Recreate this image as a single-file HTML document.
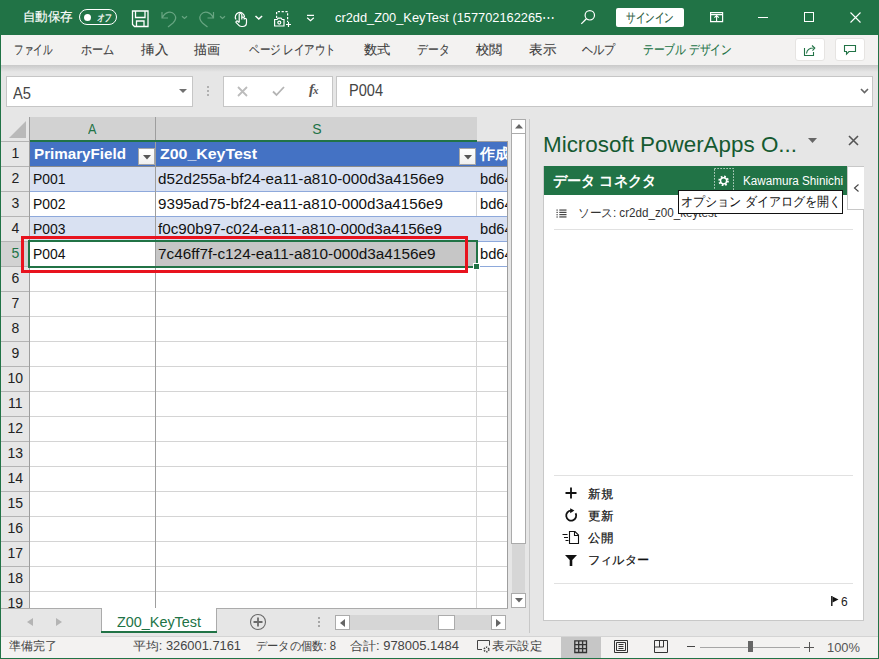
<!DOCTYPE html>
<html><head><meta charset="utf-8">
<style>
*{box-sizing:border-box;margin:0;padding:0}
html,body{width:879px;height:659px;overflow:hidden;background:#e6e6e6;font-family:"Liberation Sans",sans-serif}
.a{position:absolute}
.t{position:absolute;white-space:nowrap;line-height:1}
svg.a{overflow:visible}
</style></head><body>
<div class="a" style="left:0;top:0;width:879px;height:659px;overflow:hidden">
<div class="a" style="left:0px;top:0px;width:879px;height:35px;background:#217346"></div>
<div class="t" id="w0" style="left:23px;top:11px;font-size:12.5px;color:#fff;-webkit-text-stroke:0.15px #fff;transform:scaleX(0.9615);transform-origin:0 0">自動保存</div>
<div class="a" style="left:79px;top:9px;width:38px;height:16px;border:1px solid #fff;border-radius:8px"></div>
<div class="a" style="left:84px;top:14px;width:7px;height:7px;background:#fff;border-radius:50%"></div>
<div class="t" id="w1" style="left:97px;top:12.5px;font-size:10px;color:#fff;font-style:italic;-webkit-text-stroke:0.3px #fff;transform:scaleX(0.7000);transform-origin:0 0">オフ</div>
<svg class="a" style="left:0;top:0" width="330" height="35" viewBox="0 0 330 35">
<path d="M132.5 11h15.5v15.5h-13.5l-2-2z M135.5 11v6.5h9.5v-6.5 M136.5 26.5v-5.5h7.5v5.5" fill="none" stroke="#fff" stroke-width="1.3"/>
<g fill="none" stroke="#68a582" stroke-width="1.2">
<path d="M162 12v6h6 M162 18C165 12 171 10 174.5 14.5C177 18 175 21 173 23L168 27"/>
<path d="M182 16.2l2.5 2.3 2.5-2.3"/>
<path d="M213.5 12v6h-6 M213.5 18C210.5 12 204.5 10 201 14.5C198.5 18 200.5 21 202.5 23L207.5 27"/>
<path d="M220 16.2l2.5 2.3 2.5-2.3"/>
</g>
<g fill="none" stroke="#fff" stroke-width="1.2">
<path d="M236 19.5A4.6 4.6 0 1 1 244.5 17"/>
<path d="M239.2 22.5V14.8a1.3 1.3 0 0 1 2.6 0V19.5 M241.8 18.2a1.2 1.2 0 0 1 2.4 0.3v1 M244.2 19.2a1.2 1.2 0 0 1 2.3 0.5v2.8c0 2.5-1.5 4-4 4h-1c-1.5 0-2.5-0.6-3.3-1.8L236 22.5a1.1 1.1 0 0 1 1.8-1.2l1.4 1.4"/>
<path d="M255.5 16l3.3 3 3.3-3" stroke-width="1.5"/>
<path d="M276.6 18V11.6h11V22" stroke-dasharray="2.2 1.6"/>
<path d="M274.6 19.5h2.5l1-1.3h3l1 1.3h1.9v6.5h-9.4z"/>
<circle cx="279.3" cy="22.6" r="1.5"/>
<path d="M288.5 22v5 M286 24.5h5"/>
<path d="M307 15.3h7 M307.2 17.8l3.3 3 3.3-3"/>
</g>
</svg>
<div class="t" id="w2" style="left:335px;top:10.5px;font-size:13px;color:#fff;transform:scaleX(0.9851);transform-origin:0 0">cr2dd_Z00_KeyTest (157702162265⋯</div>
<svg class="a" style="left:0;top:0" width="879" height="35" viewBox="0 0 879 35"><circle cx="589.8" cy="15.3" r="4.7" fill="none" stroke="#fff" stroke-width="1.2"/><path d="M586.4 18.8L581.3 23.9" stroke="#fff" stroke-width="1.3"/></svg>
<div class="a" style="left:616px;top:8px;width:68px;height:19px;background:#fff;border-radius:2px"></div>
<div class="t" id="w3" style="left:626px;top:11.5px;font-size:12.5px;color:#2a5a3e;-webkit-text-stroke:0.15px #2a5a3e;transform:scaleX(0.7385);transform-origin:0 0">サインイン</div>
<svg class="a" style="left:0;top:0" width="879" height="35" viewBox="0 0 879 35"><g fill="none" stroke="#fff" stroke-width="1.2"><path d="M710.6 12.6h12v9h-12z M710.6 14.6h12"/><path d="M716.6 21.5V15.5 M714.4 17.7l2.2-2.2 2.2 2.2" stroke-width="1.1"/></g></svg>
<div class="a" style="left:758px;top:17px;width:10px;height:1px;background:#fff"></div>
<div class="a" style="left:804px;top:12px;width:10px;height:10px;border:1px solid #fff"></div>
<svg class="a" style="left:850px;top:12px" width="11" height="11" viewBox="0 0 11 11"><path d="M0.5 0.5l10 10 M10.5 0.5l-10 10" stroke="#fff" stroke-width="1.1"/></svg>
<div class="a" style="left:1px;top:35px;width:877px;height:30px;background:#f3f2f1"></div>
<div class="a" style="left:1px;top:65px;width:877px;height:7px;background:linear-gradient(#c9c9c9,#e6e6e6)"></div>
<div class="t" id="w4" style="left:13.5px;top:43px;font-size:13px;color:#3c3c3c;-webkit-text-stroke:0.12px #3c3c3c;transform:scaleX(0.7308);transform-origin:0 0">ファイル</div>
<div class="t" id="w5" style="left:80.5px;top:43px;font-size:13px;color:#3c3c3c;-webkit-text-stroke:0.12px #3c3c3c;transform:scaleX(0.8590);transform-origin:0 0">ホーム</div>
<div class="t" id="w6" style="left:140.5px;top:43px;font-size:13px;color:#3c3c3c;-webkit-text-stroke:0.12px #3c3c3c;transform:scaleX(1.0385);transform-origin:0 0">挿入</div>
<div class="t" id="w7" style="left:193.5px;top:43px;font-size:13px;color:#3c3c3c;-webkit-text-stroke:0.12px #3c3c3c;transform:scaleX(1.0000);transform-origin:0 0">描画</div>
<div class="t" id="w8" style="left:248.5px;top:43px;font-size:13px;color:#3c3c3c;-webkit-text-stroke:0.12px #3c3c3c;transform:scaleX(0.8084);transform-origin:0 0">ページ レイアウト</div>
<div class="t" id="w9" style="left:363.5px;top:43px;font-size:13px;color:#3c3c3c;-webkit-text-stroke:0.12px #3c3c3c;transform:scaleX(1.0192);transform-origin:0 0">数式</div>
<div class="t" id="w10" style="left:416.5px;top:43px;font-size:13px;color:#3c3c3c;-webkit-text-stroke:0.12px #3c3c3c;transform:scaleX(0.8333);transform-origin:0 0">データ</div>
<div class="t" id="w11" style="left:475.5px;top:43px;font-size:13px;color:#3c3c3c;-webkit-text-stroke:0.12px #3c3c3c;transform:scaleX(1.0192);transform-origin:0 0">校閲</div>
<div class="t" id="w12" style="left:528.5px;top:43px;font-size:13px;color:#3c3c3c;-webkit-text-stroke:0.12px #3c3c3c;transform:scaleX(1.0385);transform-origin:0 0">表示</div>
<div class="t" id="w13" style="left:581.5px;top:43px;font-size:13px;color:#3c3c3c;-webkit-text-stroke:0.12px #3c3c3c;transform:scaleX(0.8590);transform-origin:0 0">ヘルプ</div>
<div class="t" id="w14" style="left:643px;top:43px;font-size:13px;color:#217346;-webkit-text-stroke:0.12px #217346;transform:scaleX(0.8269);transform-origin:0 0">テーブル デザイン</div>
<div class="a" style="left:795px;top:38px;width:30px;height:23px;background:#fff;border:1px solid #e6e4e2;border-radius:3px"></div>
<div class="a" style="left:835px;top:38px;width:30px;height:23px;background:#fff;border:1px solid #e6e4e2;border-radius:3px"></div>
<svg class="a" style="left:0;top:0" width="879" height="70" viewBox="0 0 879 70"><g fill="none" stroke="#217346" stroke-width="1.1">
<path d="M804.5 48v7.5h9v-3.5"/>
<path d="M806.5 53.5c0.5-3.5 3-5.5 7-5.5 M812 45.5l2.8 2.6-2.3 2.6"/>
<path d="M844.5 45.5h11v6h-6.5l-2.5 2.6v-2.6h-2z"/>
</g></svg>
<div class="a" style="left:1px;top:72px;width:877px;height:45px;background:#e6e6e6"></div>
<div class="a" style="left:6px;top:76px;width:187px;height:31px;background:#fff;border:1px solid #c6c6c6"></div>
<div class="t" id="w15" style="left:13px;top:86px;font-size:16px;color:#444;transform:scaleX(0.9194);transform-origin:0 0">A5</div>
<svg class="a" style="left:179px;top:89px" width="8" height="5" viewBox="0 0 8 5"><path d="M0 0h8L4 4z" fill="#707070"/></svg>
<div class="a" style="left:207px;top:86px;width:2px;height:2px;background:#b0b0b0"></div>
<div class="a" style="left:207px;top:90px;width:2px;height:2px;background:#b0b0b0"></div>
<div class="a" style="left:207px;top:94px;width:2px;height:2px;background:#b0b0b0"></div>
<div class="a" style="left:223px;top:76px;width:110px;height:31px;background:#fff;border:1px solid #c6c6c6"></div>
<svg class="a" style="left:237px;top:86px" width="11" height="11" viewBox="0 0 11 11"><path d="M1 1l9 9 M10 1l-9 9" stroke="#bcbcbc" stroke-width="1.8"/></svg>
<svg class="a" style="left:272px;top:85px" width="13" height="12" viewBox="0 0 13 12"><path d="M1 6.5l3.5 3.5L12 2" fill="none" stroke="#b4b4b4" stroke-width="1.8"/></svg>
<div class="t" style="left:309px;top:82px;font-size:15px;color:#555;font-family:'Liberation Serif',serif;font-weight:bold"><i>f</i><i style='font-size:11px;margin-left:-1px'>x</i></div>
<div class="a" style="left:336px;top:76px;width:537px;height:31px;background:#fff;border:1px solid #c6c6c6"></div>
<div class="t" id="w16" style="left:349px;top:83px;font-size:16px;color:#444;transform:scaleX(0.9097);transform-origin:0 0">P004</div>
<svg class="a" style="left:860px;top:88px" width="9" height="6" viewBox="0 0 9 6"><path d="M1 1l3.5 3.5L8 1" fill="none" stroke="#666" stroke-width="1.6"/></svg>
<div class="a" style="left:1px;top:117px;width:510px;height:491px;background:#e6e6e6"></div>
<div class="a" style="left:30px;top:142px;width:477px;height:466px;background:#fff"></div>
<div class="a" style="left:30px;top:266px;width:477px;height:1px;background:#d4d4d4"></div>
<div class="a" style="left:30px;top:291px;width:477px;height:1px;background:#d4d4d4"></div>
<div class="a" style="left:30px;top:316px;width:477px;height:1px;background:#d4d4d4"></div>
<div class="a" style="left:30px;top:341px;width:477px;height:1px;background:#d4d4d4"></div>
<div class="a" style="left:30px;top:366px;width:477px;height:1px;background:#d4d4d4"></div>
<div class="a" style="left:30px;top:391px;width:477px;height:1px;background:#d4d4d4"></div>
<div class="a" style="left:30px;top:416px;width:477px;height:1px;background:#d4d4d4"></div>
<div class="a" style="left:30px;top:441px;width:477px;height:1px;background:#d4d4d4"></div>
<div class="a" style="left:30px;top:466px;width:477px;height:1px;background:#d4d4d4"></div>
<div class="a" style="left:30px;top:491px;width:477px;height:1px;background:#d4d4d4"></div>
<div class="a" style="left:30px;top:516px;width:477px;height:1px;background:#d4d4d4"></div>
<div class="a" style="left:30px;top:541px;width:477px;height:1px;background:#d4d4d4"></div>
<div class="a" style="left:30px;top:566px;width:477px;height:1px;background:#d4d4d4"></div>
<div class="a" style="left:30px;top:591px;width:477px;height:1px;background:#d4d4d4"></div>
<div class="a" style="left:476px;top:166px;width:1px;height:442px;background:#d4d4d4"></div>
<div class="a" style="left:30px;top:142px;width:477px;height:24px;background:#4472c4"></div>
<div class="a" style="left:477px;top:141px;width:30px;height:1px;background:#9e9e9e"></div>
<div class="a" style="left:30px;top:166px;width:477px;height:1px;background:#8c8c8c"></div>
<div class="a" style="left:30px;top:167px;width:477px;height:24px;background:#d9e1f2"></div>
<div class="a" style="left:30px;top:217px;width:477px;height:24px;background:#d9e1f2"></div>
<div class="a" style="left:30px;top:191px;width:477px;height:1px;background:#8ea9db"></div>
<div class="a" style="left:30px;top:216px;width:477px;height:1px;background:#8ea9db"></div>
<div class="a" style="left:30px;top:241px;width:477px;height:1px;background:#8ea9db"></div>
<div class="a" style="left:30px;top:266px;width:477px;height:1px;background:#8ea9db"></div>
<div class="a" style="left:156px;top:242px;width:320px;height:24px;background:#c6c6c6"></div>
<div class="a" style="left:155px;top:142px;width:1px;height:466px;background:#9e9e9e"></div>
<div class="a" style="left:507px;top:141px;width:1px;height:467px;background:#9e9e9e"></div>
<div class="a" style="left:30px;top:117px;width:125px;height:23px;background:#d2d2d2"></div>
<div class="a" style="left:156px;top:117px;width:321px;height:23px;background:#d2d2d2"></div>
<div class="a" style="left:155px;top:117px;width:1px;height:23px;background:#9e9e9e"></div>
<div class="a" style="left:29px;top:140px;width:448px;height:2px;background:#217346"></div>
<div class="t" style="left:88.3px;top:122px;font-size:14px;color:#217346;transform:scaleX(0.9);transform-origin:0 0">A</div>
<div class="t" style="left:312.3px;top:122px;font-size:14px;color:#217346">S</div>
<svg class="a" style="left:9px;top:121px" width="18" height="17" viewBox="0 0 18 17"><path d="M17 0V17H0z" fill="#b9b9b9"/></svg>
<div class="a" style="left:1px;top:241px;width:28px;height:25px;background:#d2d2d2"></div>
<div class="a" style="left:29px;top:117px;width:1px;height:491px;background:#9e9e9e"></div>
<div class="a" style="left:1px;top:141px;width:28px;height:1px;background:#b4b4b4"></div>
<div class="a" style="left:1px;top:166px;width:28px;height:1px;background:#b4b4b4"></div>
<div class="a" style="left:1px;top:191px;width:28px;height:1px;background:#b4b4b4"></div>
<div class="a" style="left:1px;top:216px;width:28px;height:1px;background:#b4b4b4"></div>
<div class="a" style="left:1px;top:241px;width:28px;height:1px;background:#b4b4b4"></div>
<div class="a" style="left:1px;top:266px;width:28px;height:1px;background:#b4b4b4"></div>
<div class="a" style="left:1px;top:291px;width:28px;height:1px;background:#b4b4b4"></div>
<div class="a" style="left:1px;top:316px;width:28px;height:1px;background:#b4b4b4"></div>
<div class="a" style="left:1px;top:341px;width:28px;height:1px;background:#b4b4b4"></div>
<div class="a" style="left:1px;top:366px;width:28px;height:1px;background:#b4b4b4"></div>
<div class="a" style="left:1px;top:391px;width:28px;height:1px;background:#b4b4b4"></div>
<div class="a" style="left:1px;top:416px;width:28px;height:1px;background:#b4b4b4"></div>
<div class="a" style="left:1px;top:441px;width:28px;height:1px;background:#b4b4b4"></div>
<div class="a" style="left:1px;top:466px;width:28px;height:1px;background:#b4b4b4"></div>
<div class="a" style="left:1px;top:491px;width:28px;height:1px;background:#b4b4b4"></div>
<div class="a" style="left:1px;top:516px;width:28px;height:1px;background:#b4b4b4"></div>
<div class="a" style="left:1px;top:541px;width:28px;height:1px;background:#b4b4b4"></div>
<div class="a" style="left:1px;top:566px;width:28px;height:1px;background:#b4b4b4"></div>
<div class="a" style="left:1px;top:591px;width:28px;height:1px;background:#b4b4b4"></div>
<div class="t" style="left:15.3px;top:146px;font-size:14px;color:#222;transform:translateX(-50%)">1</div>
<div class="t" style="left:15.3px;top:171px;font-size:14px;color:#222;transform:translateX(-50%)">2</div>
<div class="t" style="left:15.3px;top:196px;font-size:14px;color:#222;transform:translateX(-50%)">3</div>
<div class="t" style="left:15.3px;top:221px;font-size:14px;color:#222;transform:translateX(-50%)">4</div>
<div class="t" style="left:15.3px;top:246px;font-size:14px;color:#217346;transform:translateX(-50%)">5</div>
<div class="t" style="left:15.3px;top:271px;font-size:14px;color:#222;transform:translateX(-50%)">6</div>
<div class="t" style="left:15.3px;top:296px;font-size:14px;color:#222;transform:translateX(-50%)">7</div>
<div class="t" style="left:15.3px;top:321px;font-size:14px;color:#222;transform:translateX(-50%)">8</div>
<div class="t" style="left:15.3px;top:346px;font-size:14px;color:#222;transform:translateX(-50%)">9</div>
<div class="t" style="left:15.3px;top:371px;font-size:14px;color:#222;transform:translateX(-50%)">10</div>
<div class="t" style="left:15.3px;top:396px;font-size:14px;color:#222;transform:translateX(-50%)">11</div>
<div class="t" style="left:15.3px;top:421px;font-size:14px;color:#222;transform:translateX(-50%)">12</div>
<div class="t" style="left:15.3px;top:446px;font-size:14px;color:#222;transform:translateX(-50%)">13</div>
<div class="t" style="left:15.3px;top:471px;font-size:14px;color:#222;transform:translateX(-50%)">14</div>
<div class="t" style="left:15.3px;top:496px;font-size:14px;color:#222;transform:translateX(-50%)">15</div>
<div class="t" style="left:15.3px;top:521px;font-size:14px;color:#222;transform:translateX(-50%)">16</div>
<div class="t" style="left:15.3px;top:546px;font-size:14px;color:#222;transform:translateX(-50%)">17</div>
<div class="t" style="left:15.3px;top:571px;font-size:14px;color:#222;transform:translateX(-50%)">18</div>
<div class="t" style="left:15.3px;top:596px;font-size:14px;color:#222;transform:translateX(-50%)">19</div>
<div class="t" id="w17" style="left:34px;top:146px;font-size:15px;color:#fff;font-weight:bold;transform:scaleX(1.0124);transform-origin:0 0">PrimaryField</div>
<div class="t" id="w18" style="left:160px;top:146px;font-size:15px;color:#fff;font-weight:bold;transform:scaleX(1.0608);transform-origin:0 0">Z00_KeyTest</div>
<div class="a" style="left:477px;top:142px;width:30px;height:24px;overflow:hidden"><div class="t" style="left:3px;top:4px;font-size:15px;color:#fff;font-weight:bold">作成</div></div>
<div class="a" style="left:138px;top:148px;width:17px;height:17px;background:linear-gradient(#fff,#f0f0f0);border:1px solid #a6a6a6"></div>
<svg class="a" style="left:143px;top:155px" width="8" height="5" viewBox="0 0 8 5"><path d="M0 0h8L4 4.5z" fill="#555"/></svg>
<div class="a" style="left:459px;top:148px;width:17px;height:17px;background:linear-gradient(#fff,#f0f0f0);border:1px solid #a6a6a6"></div>
<svg class="a" style="left:464px;top:155px" width="8" height="5" viewBox="0 0 8 5"><path d="M0 0h8L4 4.5z" fill="#555"/></svg>
<div class="t" id="w19" style="left:33px;top:172px;font-size:14.7px;color:#111;transform:scaleX(0.9472);transform-origin:0 0">P001</div>
<div class="t" id="w20" style="left:158px;top:172px;font-size:14.7px;color:#111;transform:scaleX(1.0371);transform-origin:0 0">d52d255a-bf24-ea11-a810-000d3a4156e9</div>
<div class="a" style="left:477px;top:167px;width:30px;height:24px;overflow:hidden"><div class="t" style="left:3px;top:5px;font-size:14.7px;color:#111">bd64</div></div>
<div class="t" id="w21" style="left:33px;top:197px;font-size:14.7px;color:#111;transform:scaleX(0.9472);transform-origin:0 0">P002</div>
<div class="t" id="w22" style="left:158px;top:197px;font-size:14.7px;color:#111;transform:scaleX(1.0334);transform-origin:0 0">9395ad75-bf24-ea11-a810-000d3a4156e9</div>
<div class="a" style="left:477px;top:192px;width:30px;height:24px;overflow:hidden"><div class="t" style="left:3px;top:5px;font-size:14.7px;color:#111">bd64</div></div>
<div class="t" id="w23" style="left:33px;top:222px;font-size:14.7px;color:#111;transform:scaleX(0.9472);transform-origin:0 0">P003</div>
<div class="t" id="w24" style="left:158px;top:222px;font-size:14.7px;color:#111;transform:scaleX(1.0360);transform-origin:0 0">f0c90b97-c024-ea11-a810-000d3a4156e9</div>
<div class="a" style="left:477px;top:217px;width:30px;height:24px;overflow:hidden"><div class="t" style="left:3px;top:5px;font-size:14.7px;color:#111">bd64</div></div>
<div class="t" id="w25" style="left:33px;top:247px;font-size:14.7px;color:#111;transform:scaleX(0.9472);transform-origin:0 0">P004</div>
<div class="t" id="w26" style="left:158px;top:247px;font-size:14.7px;color:#111;transform:scaleX(1.0445);transform-origin:0 0">7c46ff7f-c124-ea11-a810-000d3a4156e9</div>
<div class="a" style="left:477px;top:242px;width:30px;height:24px;overflow:hidden"><div class="t" style="left:3px;top:5px;font-size:14.7px;color:#111">bd64</div></div>
<div class="a" style="left:28px;top:240px;width:450px;height:28px;border:2px solid #217346"></div>
<div class="a" style="left:473px;top:263px;width:7px;height:7px;background:#217346;border:1px solid #fff"></div>
<div class="a" style="left:21px;top:236px;width:447px;height:37px;border:3px solid #e8131e"></div>
<div class="a" style="left:512px;top:119px;width:13px;height:489px;background:#d6d6d6"></div>
<div class="a" style="left:511px;top:119px;width:15px;height:15px;background:#fff;border:1px solid #ababab"></div>
<svg class="a" style="left:515px;top:124px" width="8" height="5" viewBox="0 0 8 5"><path d="M0 4.5h8L4 0z" fill="#666"/></svg>
<div class="a" style="left:511px;top:133px;width:15px;height:411px;background:#fff;border:1px solid #ababab"></div>
<div class="a" style="left:511px;top:593px;width:15px;height:15px;background:#fff;border:1px solid #ababab"></div>
<svg class="a" style="left:515px;top:598px" width="8" height="5" viewBox="0 0 8 5"><path d="M0 0h8L4 4.5z" fill="#666"/></svg>
<div class="a" style="left:529px;top:119px;width:1px;height:514px;background:#c8c8c8"></div>
<div class="a" style="left:1px;top:608px;width:528px;height:28px;background:#e6e6e6"></div>
<div class="a" style="left:1px;top:608px;width:507px;height:1px;background:#ababab"></div>
<svg class="a" style="left:27px;top:618px" width="6" height="8" viewBox="0 0 6 8"><path d="M6 0v8L0 4z" fill="#b4b4b4"/></svg>
<svg class="a" style="left:56px;top:618px" width="6" height="8" viewBox="0 0 6 8"><path d="M0 0v8L6 4z" fill="#b4b4b4"/></svg>
<div class="a" style="left:101px;top:608px;width:116px;height:25px;background:#fff;border-left:1px solid #ababab;border-right:1px solid #ababab"></div>
<div class="a" style="left:101px;top:631px;width:116px;height:2px;background:#217346"></div>
<div class="t" id="w27" style="left:117px;top:614.5px;font-size:14px;color:#217346;transform:scaleX(1.0279);transform-origin:0 0">Z00_KeyTest</div>
<svg class="a" style="left:249px;top:613px" width="18" height="18" viewBox="0 0 18 18"><circle cx="9" cy="9" r="7.5" fill="none" stroke="#6a6a6a" stroke-width="1.1"/><path d="M9 4.5v9 M4.5 9h9" stroke="#6a6a6a" stroke-width="1.8"/></svg>
<div class="a" style="left:318px;top:617px;width:2px;height:2px;background:#a6a6a6"></div>
<div class="a" style="left:318px;top:621px;width:2px;height:2px;background:#a6a6a6"></div>
<div class="a" style="left:318px;top:625px;width:2px;height:2px;background:#a6a6a6"></div>
<div class="a" style="left:335px;top:615px;width:157px;height:15px;background:#d6d6d6"></div>
<div class="a" style="left:335px;top:615px;width:15px;height:15px;background:#fff;border:1px solid #ababab"></div>
<svg class="a" style="left:340px;top:619px" width="5" height="8" viewBox="0 0 5 8"><path d="M5 0v8L0 4z" fill="#666"/></svg>
<div class="a" style="left:438px;top:615px;width:17px;height:15px;background:#fff;border:1px solid #ababab"></div>
<div class="a" style="left:491px;top:615px;width:15px;height:15px;background:#fff;border:1px solid #ababab"></div>
<svg class="a" style="left:496px;top:619px" width="5" height="8" viewBox="0 0 5 8"><path d="M0 0v8L5 4z" fill="#666"/></svg>
<div class="a" style="left:530px;top:117px;width:348px;height:519px;background:#e6e6e6"></div>
<div class="t" id="w28" style="left:543px;top:134.3px;font-size:22px;color:#155a31;transform:scaleX(1.0184);transform-origin:0 0">Microsoft PowerApps O...</div>
<svg class="a" style="left:808px;top:138px" width="9" height="5" viewBox="0 0 9 5"><path d="M0 0h9L4.5 5z" fill="#666"/></svg>
<svg class="a" style="left:848px;top:135px" width="11" height="11" viewBox="0 0 11 11"><path d="M1 1l9 9 M10 1l-9 9" stroke="#555" stroke-width="1.6"/></svg>
<div class="a" style="left:543px;top:166px;width:321px;height:455px;background:#fff;border:1px solid #c8c8c8"></div>
<div class="a" style="left:544px;top:166px;width:303px;height:29px;background:#217346"></div>
<div class="t" id="w29" style="left:553px;top:173px;font-size:15px;color:#fff;font-weight:bold;transform:scaleX(0.9435);transform-origin:0 0">データ コネクタ</div>
<svg class="a" style="left:0;top:0" width="879" height="659" viewBox="0 0 879 659"><rect x="714.5" y="168.5" width="19" height="24" fill="none" stroke="#fff" stroke-width="1" stroke-dasharray="1.2 1.8" opacity="0.9"/>
<circle cx="723.6" cy="180.8" r="4.1" fill="none" stroke="#fff" stroke-width="2.4" stroke-dasharray="1.6 1.62"/><circle cx="723.6" cy="180.8" r="3.1" fill="none" stroke="#fff" stroke-width="1.5"/></svg>
<div class="t" id="w30" style="left:743px;top:175px;font-size:12px;color:#fff;transform:scaleX(0.9735);transform-origin:0 0">Kawamura Shinichi</div>
<div class="a" style="left:847px;top:166px;width:17px;height:44px;background:#fff;border:1px solid #c8c8c8;border-right:none"></div>
<svg class="a" style="left:853px;top:184px" width="6" height="8" viewBox="0 0 6 8"><path d="M5.5 0.5L1.5 4l4 3.5" fill="none" stroke="#444" stroke-width="1.1"/></svg>
<svg class="a" style="left:0;top:0" width="879" height="659" viewBox="0 0 879 659"><g fill="#333">
<rect x="556.5" y="209.5" width="1.2" height="1.2"/><rect x="559.3" y="209.5" width="7.2" height="1.1"/>
<rect x="556.5" y="211.8" width="1.2" height="1.2"/><rect x="559.3" y="211.8" width="7.2" height="1.1"/>
<rect x="556.5" y="214.1" width="1.2" height="1.2"/><rect x="559.3" y="214.1" width="7.2" height="1.1"/>
<rect x="556.5" y="216.4" width="1.2" height="1.2"/><rect x="559.3" y="216.4" width="7.2" height="1.1"/>
</g></svg>
<div class="t" id="w31" style="left:578px;top:207px;font-size:12px;color:#333;transform:scaleX(0.9693);transform-origin:0 0">ソース: cr2dd_z00_keytest</div>
<div class="a" style="left:554px;top:229px;width:299px;height:1px;background:#e1e1e1"></div>
<div class="a" style="left:678px;top:190px;width:165px;height:24px;background:#fff;border:1px solid #111;border-width:1.3px 1px 1.3px 1px"></div>
<div class="t" id="w32" style="left:680.5px;top:195px;font-size:13px;color:#111;transform:scaleX(0.9269);transform-origin:0 0">オプション ダイアログを開く</div>
<div class="a" style="left:554px;top:475px;width:299px;height:1px;background:#e1e1e1"></div>
<svg class="a" style="left:565px;top:487px" width="12" height="12" viewBox="0 0 12 12"><path d="M6 0.5v11 M0.5 6h11" stroke="#111" stroke-width="1.8"/></svg>
<div class="t" id="w33" style="left:588px;top:488px;font-size:12px;color:#111;-webkit-text-stroke:0.2px #111;transform:scaleX(1.0417);transform-origin:0 0">新規</div>
<svg class="a" style="left:0;top:0" width="879" height="659" viewBox="0 0 879 659"><path d="M571.2 510.6A5 5 0 1 0 575.6 513.2" fill="none" stroke="#111" stroke-width="1.8"/><path d="M570.2 508.2l4.2 2.4-4.2 2.6z" fill="#111"/></svg>
<div class="t" id="w34" style="left:588px;top:510px;font-size:12px;color:#111;-webkit-text-stroke:0.2px #111;transform:scaleX(1.0417);transform-origin:0 0">更新</div>
<svg class="a" style="left:562px;top:531px" width="18" height="13" viewBox="0 0 18 13"><path d="M7.5 0.5h5.5l3.5 3.5v8.5h-9z M12.5 0.5v4h4" fill="none" stroke="#111" stroke-width="1.1"/><path d="M0.5 3.5h5 M2 6.5h4 M3.5 9.5h3" stroke="#111" stroke-width="1.1"/></svg>
<div class="t" id="w35" style="left:588px;top:532px;font-size:12px;color:#111;-webkit-text-stroke:0.2px #111;transform:scaleX(1.0417);transform-origin:0 0">公開</div>
<svg class="a" style="left:565px;top:555px" width="12" height="11" viewBox="0 0 12 11"><path d="M0 0h12L7.3 5v6H4.7V5z" fill="#111"/></svg>
<div class="t" id="w36" style="left:588px;top:554px;font-size:12px;color:#111;-webkit-text-stroke:0.2px #111;transform:scaleX(1.0167);transform-origin:0 0">フィルター</div>
<div class="a" style="left:554px;top:583px;width:299px;height:1px;background:#e1e1e1"></div>
<svg class="a" style="left:831px;top:596px" width="8" height="10" viewBox="0 0 8 10"><path d="M0.8 0v10" stroke="#111" stroke-width="1.4"/><path d="M1.5 0.5L7.5 3.5L1.5 6.5z" fill="#111"/></svg>
<div class="t" style="left:841px;top:596px;font-size:12px;color:#222">6</div>
<div class="a" style="left:1px;top:636px;width:877px;height:22px;background:#f3f2f1"></div>
<div class="a" style="left:1px;top:636px;width:877px;height:1px;background:#d4d4d4"></div>
<div class="t" id="w37" style="left:9px;top:640px;font-size:12px;color:#444;transform:scaleX(1.0000);transform-origin:0 0">準備完了</div>
<div class="t" id="w38" style="left:133px;top:640px;font-size:12px;color:#444;transform:scaleX(1.0720);transform-origin:0 0">平均: 326001.7161</div>
<div class="t" id="w39" style="left:256px;top:640px;font-size:12px;color:#444;transform:scaleX(0.9374);transform-origin:0 0">データの個数: 8</div>
<div class="t" id="w40" style="left:350px;top:640px;font-size:12px;color:#444;transform:scaleX(1.0819);transform-origin:0 0">合計: 978005.1484</div>
<svg class="a" style="left:477px;top:640px" width="14" height="13" viewBox="0 0 14 13"><path d="M5 9.5H0.5v-9h12v5" fill="none" stroke="#444" stroke-width="1"/><circle cx="9.5" cy="9.5" r="2.3" fill="none" stroke="#444" stroke-width="1.6" stroke-dasharray="1.3 1"/></svg>
<div class="t" id="w41" style="left:492px;top:640px;font-size:12px;color:#444;transform:scaleX(1.0417);transform-origin:0 0">表示設定</div>
<div class="a" style="left:561px;top:637px;width:40px;height:21px;background:#c6c6c6"></div>
<svg class="a" style="left:0;top:0" width="879" height="659" viewBox="0 0 879 659"><g fill="none" stroke="#333">
<path d="M574.8 640.8h11.7v11.7h-11.7z M574.8 644.7h11.7 M574.8 648.6h11.7 M578.7 640.8v11.7 M582.6 640.8v11.7" stroke-width="1.3"/>
<path d="M614.5 640.5h13v12h-13z M616.5 642.5h9v8h-9z M618.5 644.5h5 M618.5 646.5h5 M618.5 648.5h5" stroke-width="1"/>
<path d="M654.5 640.5h13v12h-13z M659.5 640.5v6.5 M663.5 640.5v6.5 M654.5 647h9" stroke-width="1"/>
</g></svg>
<div class="a" style="left:687px;top:646px;width:8px;height:1.2px;background:#444"></div>
<div class="a" style="left:700px;top:647px;width:100px;height:1px;background:#a6a6a6"></div>
<div class="a" style="left:748px;top:641px;width:5px;height:11px;background:#666"></div>
<div class="a" style="left:804px;top:646.5px;width:10px;height:1px;background:#555"></div>
<div class="a" style="left:808.5px;top:641.5px;width:1px;height:10px;background:#555"></div>
<div class="t" id="w42" style="left:826.5px;top:641px;font-size:13px;color:#555;transform:scaleX(0.9925);transform-origin:0 0">100%</div>
<div class="a" style="left:0px;top:35px;width:1px;height:624px;background:#217346"></div>
<div class="a" style="left:878px;top:35px;width:1px;height:624px;background:#217346"></div>
<div class="a" style="left:0px;top:658px;width:879px;height:1px;background:#217346"></div>
</div></body></html>
